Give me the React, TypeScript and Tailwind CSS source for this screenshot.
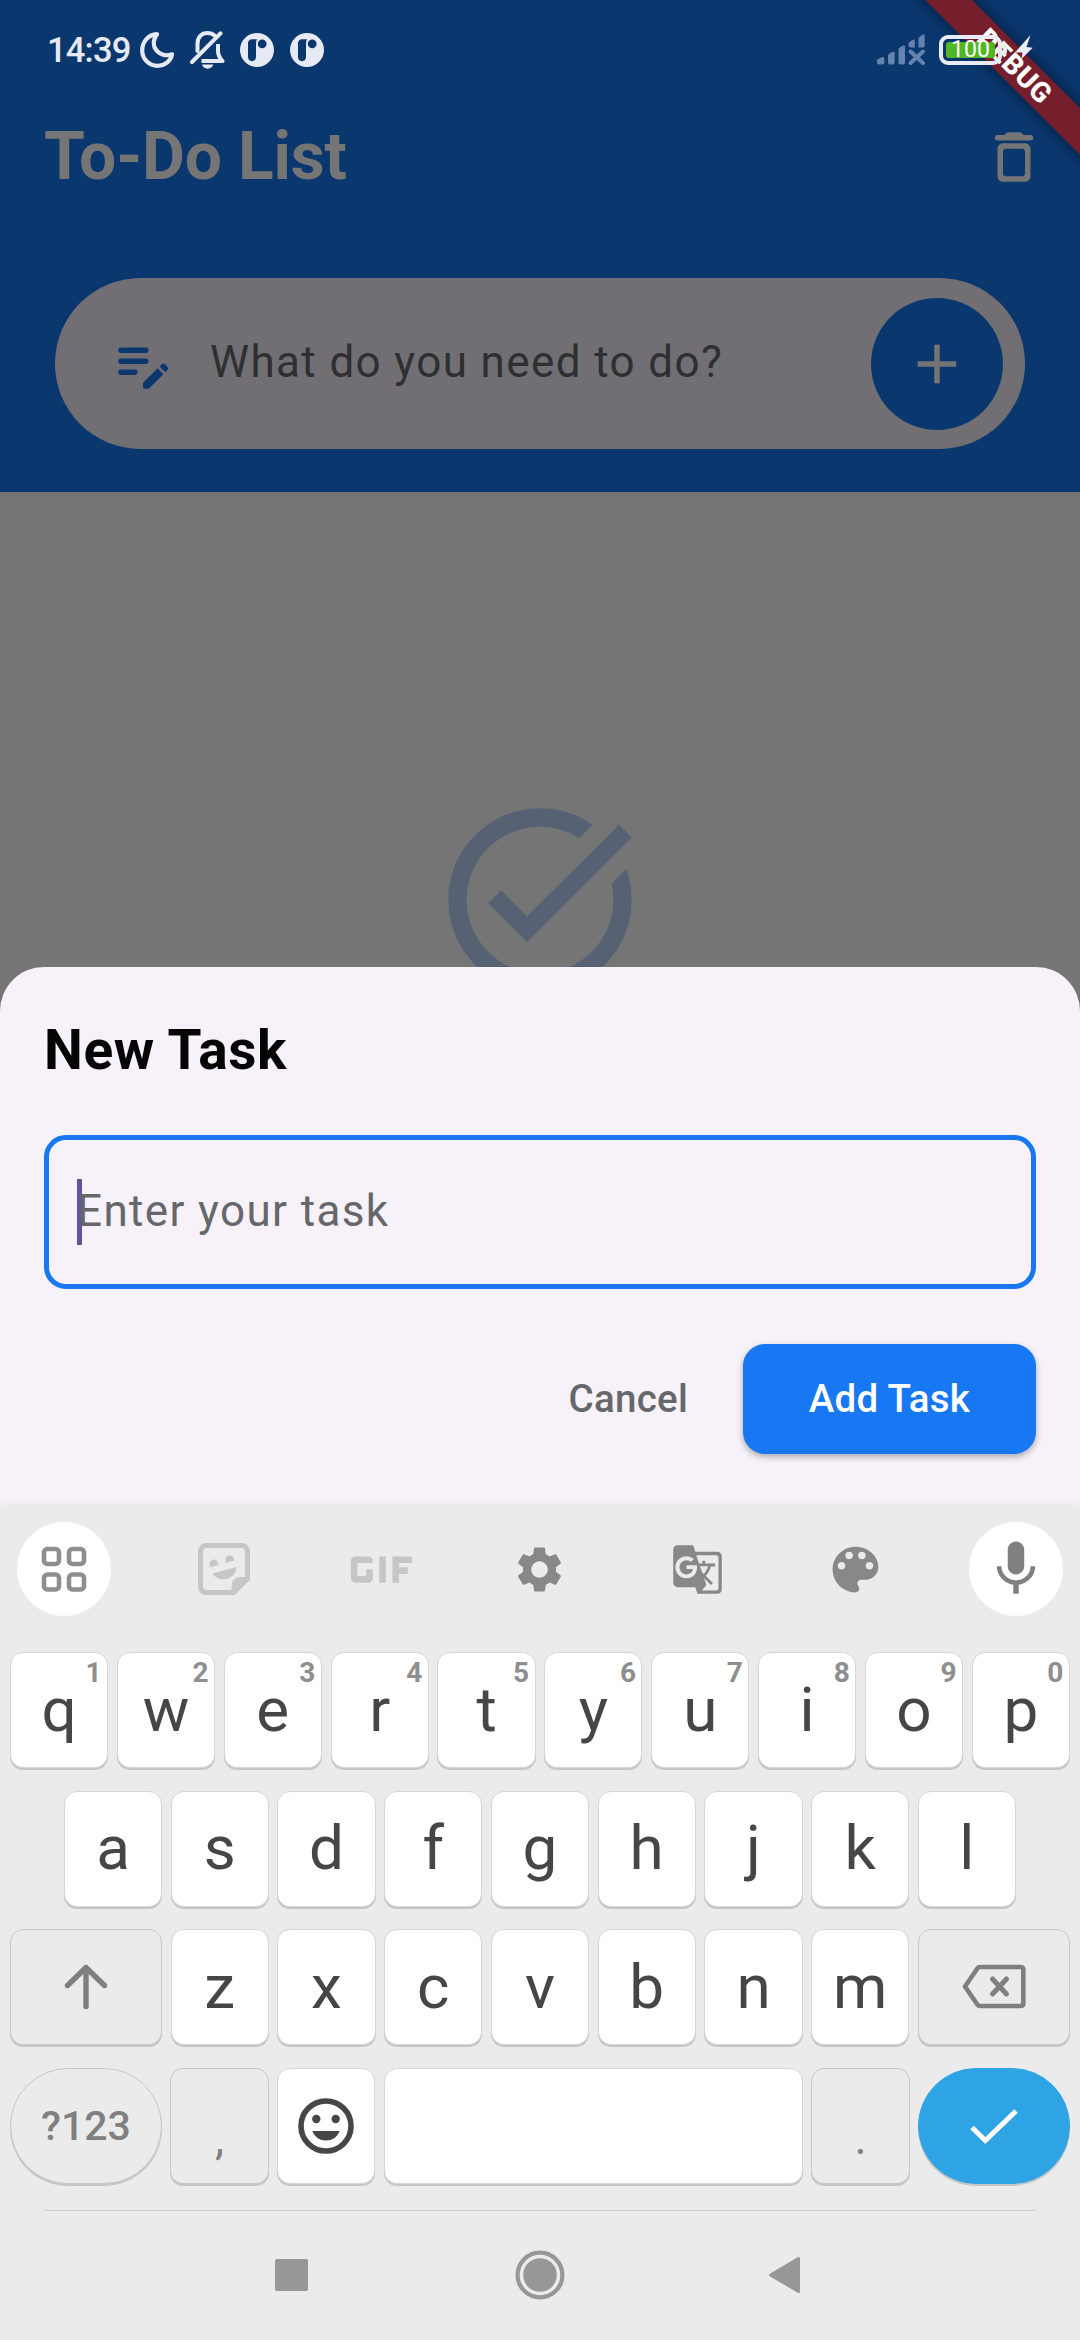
import React from "react";
import { MdSettings, MdGTranslate, MdMic, MdTaskAlt, MdAdd, MdGif } from "react-icons/md";

function MoonIcon() {
  return (
    <svg width="34" height="36" viewBox="0 0 34 36" fill="none" stroke="#e6eaf4" strokeWidth="4.200" strokeLinejoin="round">
      <path d="M17 2.200C8.500 2.500 2.200 9.500 2.200 18.200C2.200 27 8.900 33.800 17.600 33.800C24.900 33.800 30.700 29.300 32 22.300C19.500 26.500 8 14.500 17 2.200Z" />
    </svg>
  );
}

function BellOffIcon() {
  return (
    <svg width="35" height="38" viewBox="0 0 35 38" fill="none" stroke="#e6eaf4" strokeWidth="4" strokeLinecap="round">
      <path d="M2 31L30.500 2.300" />
      <path d="M7.500 20V13C7.500 6 11.500 2.100 17.500 2.100C20.500 2.100 22.800 2.900 24.600 4.500" />
      <path d="M28 13V20C28 24.500 29 26.300 32.500 30H11.500" strokeLinejoin="round" strokeLinecap="butt" />
      <path d="M12 33.600H23.200C22.600 36.200 20.500 37.700 17.600 37.700S12.600 36.200 12 33.600Z" fill="#e6eaf4" stroke="none" />
    </svg>
  );
}

function AppBadgeIcon() {
  return (
    <svg width="34" height="34" viewBox="0 0 34 34">
      <path
        fillRule="evenodd"
        fill="#e6eaf4"
        d="M17 0a17 17 0 1 1 0 34a17 17 0 1 1 0-34ZM12 6.200C9.500 6.200 8 8 8 10.500V23.500C8 26.300 9.500 28.200 12 28.200S16 26.300 16 23.500V10.500C16 8.500 16.300 7.500 17 6.200ZM22.200 6.400a4.400 4.400 0 1 0 0 8.800a4.400 4.400 0 1 0 0-8.800Z"
      />
    </svg>
  );
}

function SignalIcon() {
  return (
    <svg width="48" height="31" viewBox="0 0 48 31" fill="#6583ac">
      <path d="M0 26Q3 23.500 5.500 23Q7.300 22.600 7.300 24.500V28.500Q7.300 30.500 5.300 30.500H2Q0 30.500 0 28.500Z" />
      <path d="M11 21Q13 18.500 16 17.800Q17.600 17.500 17.600 19.200V28.500Q17.600 30.500 15.600 30.500H13Q11 30.500 11 28.500Z" />
      <path d="M21.500 15Q23.500 12.500 26.300 11.600Q28 11.200 28 13V28.500Q28 30.500 26 30.500H23.500Q21.500 30.500 21.500 28.500Z" />
      <path d="M31.500 9Q33.500 6.500 36.300 5.700Q37.800 5.300 37.800 7V13.500H33.500Q31.500 13.500 31.500 11.500Z" />
      <path d="M41.500 4Q43.500 1.500 46 .5Q47.700 0 47.700 1.800V11.500Q47.700 13.500 45.700 13.500H41.500Z" />
      <path d="M33.500 17.500L46 29M46 17.500L33.500 29" stroke="#6583ac" strokeWidth="4" strokeLinecap="round" />
    </svg>
  );
}

function StatusBar() {
  return (
    <div className="relative z-10 flex h-[99px] items-center justify-between pl-[47px] pr-[47px]">
      <div className="flex items-center">
        <span className="w-[93px] pt-[2px] text-[34.500px] font-medium leading-none tracking-[-0.800px] text-[#e6eaf4]">14:39</span>
        <MoonIcon />
        <span className="ml-[16px]"><BellOffIcon /></span>
        <span className="ml-[15px]"><AppBadgeIcon /></span>
        <span className="ml-[16px]"><AppBadgeIcon /></span>
      </div>
      <div className="flex items-center">
        <SignalIcon />
        <div className="ml-[14px] flex h-[30px] w-[63px] items-center rounded-[9px] border-4 border-[#e9ecf5] p-[3px]">
          <div className="flex h-full w-full items-center justify-center rounded-[3px] bg-[#51b623] text-[23px] leading-none text-white">
            100
          </div>
        </div>
        <span className="ml-[1px] h-[11px] w-[4px] rounded-r-[4px] bg-[#e9ecf5]" />
        <svg className="mb-[6px] ml-[8px]" width="18" height="24" viewBox="0 0 18 24">
          <path d="M15.500 0L0 17.500H7.500L6.500 24L17.700 12.800L11.500 12Z" fill="#e9ecf5" />
        </svg>
      </div>
    </div>
  );
}

function DebugRibbon() {
  return (
    <div className="pointer-events-none absolute right-0 top-0 h-[220px] w-[220px] overflow-hidden">
      <div className="absolute left-[-46px] top-[49px] flex h-[33px] w-[400px] rotate-45 items-center justify-center bg-[#761e2b] pl-[2px] text-[28px] font-extrabold leading-none tracking-[0.600px] text-white shadow-[0_0_16px_rgba(0,0,0,0.500)]">
        DEBUG
      </div>
    </div>
  );
}

function TrashIcon() {
  return (
    <svg width="66" height="66" viewBox="0 0 24 24" fill="#757575">
      <path d="M6 19c0 1.100.9 2 2 2h8c1.100 0 2-.9 2-2V9c0-1.100-.9-2-2-2H8c-1.100 0-2 .9-2 2v10zM9 9h6c.55 0 1 .45 1 1v8c0 .55-.45 1-1 1H9c-.55 0-1-.45-1-1v-8c0-.55.45-1 1-1zm6.500-5l-.71-.71c-.18-.18-.44-.29-.7-.29H9.910c-.26 0-.52.11-.7.29L8.500 4H6c-.55 0-1 .45-1 1s.45 1 1 1h12c.55 0 1-.45 1-1s-.45-1-1-1h-2.500z" />
    </svg>
  );
}

function EditNoteIcon() {
  return (
    <svg width="66" height="66" viewBox="0 0 24 24" fill="#0b376f">
      <rect x="3" y="6" width="11" height="2" rx="0.900" />
      <rect x="3" y="10" width="11" height="2" rx="0.900" />
      <rect x="3" y="14" width="7" height="2" rx="0.900" />
      <path d="M18.010 12.870l.71-.71a.996.996 0 0 1 1.410 0l.71.71c.39.39.39 1.020 0 1.410l-.71.71-2.120-2.120zM17.300 13.580l-5.150 5.150q-.15.15-.15.350v1.420q0 .5.5.5h1.410q.2 0 .36-.15l5.150-5.150z" />
    </svg>
  );
}

function Header() {
  return (
    <header className="relative h-[492px] shrink-0 bg-[#0b376f]">
      <DebugRibbon />
      <StatusBar />
      <div className="flex h-[115px] items-center justify-between pl-[44px] pr-[33px]">
        <h1 className="text-[66px] font-bold leading-none tracking-[-0.200px] text-[#757575]">To-Do List</h1>
        <TrashIcon />
      </div>
      <div className="mx-[55px] mt-[64px] flex h-[171px] items-center rounded-full bg-[#716f73] pl-[55px] pr-[22px]">
        <EditNoteIcon />
        <span className="ml-[34px] flex-1 pb-[4px] text-[44px] leading-none tracking-[1.375px] text-[#2e2f31]">What do you need to do?</span>
        <span className="flex h-[132px] w-[132px] items-center justify-center rounded-full bg-[#0b376f]">
          <MdAdd size={66} color="#757575" />
        </span>
      </div>
    </header>
  );
}

function TaskSheet() {
  return (
    <section className="relative -mt-[44px] h-[539px] shrink-0 rounded-t-[44px] bg-[#f7f2fa] px-[44px] pt-[44px]">
      <h2 className="h-[80px] text-[55px] font-bold leading-[78px] tracking-[0.600px] text-[#050505]">New Task</h2>
      <div className="relative mt-[44px] flex h-[154px] items-center rounded-[22px] border-[5.500px] border-[#1877f2] pl-[28px]">
        <span className="absolute left-[27.500px] top-[39px] h-[66px] w-[5.500px] bg-[#6750a4]" />
        <span className="relative pb-[2px] text-[44px] leading-none tracking-[1.375px] text-[#65676b]">Enter your task</span>
      </div>
      <div className="mt-[55px] flex h-[110px] items-center justify-end text-[38.500px] font-medium">
        <span className="mr-[55px] tracking-[0.275px] text-[#65676b]">Cancel</span>
        <button className="h-full w-[293px] rounded-[22px] bg-[#1877f2] tracking-[0.275px] text-white shadow-[0_3px_6px_rgba(0,0,0,0.300)]">Add Task</button>
      </div>
    </section>
  );
}

function StickerIcon() {
  return (
    <svg width="52" height="52" viewBox="0 0 52 52">
      <path d="M9 2.500H43Q49.500 2.500 49.500 9V35.500L35.500 49.500H9Q2.500 49.500 2.500 43V9Q2.500 2.500 9 2.500Z" fill="none" stroke="#c6c6c6" strokeWidth="5" />
      <path d="M52 34V36.500L36.500 52H33.500V43.500Q33.500 34 43 34ZM14.500 30.500L38.500 24Q37.500 34.500 27.500 36.200Q18.500 37 14.500 30.500ZM11.500 24.500Q10.500 17 15.500 16.500Q20 16.500 20.500 22ZM27.500 20Q26.500 12.500 31.500 12.200Q36 12.500 36.500 17.500Z" fill="#c6c6c6" />
    </svg>
  );
}

function GridIcon() {
  return (
    <svg width="46" height="46" viewBox="0 0 46 46" fill="none" stroke="#8e8e8e" strokeWidth="4.600">
      <rect x="3" y="3" width="15" height="15" rx="3.500" />
      <rect x="28" y="3" width="15" height="15" rx="3.500" />
      <rect x="3" y="28.500" width="15" height="15" rx="3.500" />
      <rect x="28" y="28.500" width="15" height="15" rx="3.500" />
    </svg>
  );
}

function PaletteIcon() {
  return (
    <svg width="61" height="61" viewBox="0 0 24 24" fill="#888888">
      <path d="M12 3c-4.970 0-9 4.030-9 9s4.030 9 9 9c.83 0 1.500-.67 1.500-1.500 0-.39-.15-.74-.39-1.010-.23-.26-.38-.61-.38-.99 0-.83.67-1.500 1.500-1.500H16c2.760 0 5-2.240 5-5 0-4.420-4.030-8-9-8zm-5.500 9c-.83 0-1.500-.67-1.500-1.500S5.670 9 6.500 9 8 9.670 8 10.500 7.330 12 6.500 12zm3-4C8.670 8 8 7.330 8 6.500S8.670 5 9.500 5s1.500.67 1.500 1.500S10.330 8 9.500 8zm5 0c-.83 0-1.500-.67-1.500-1.500S13.670 5 14.500 5s1.500.67 1.500 1.500S15.330 8 14.500 8zm3 4c-.83 0-1.500-.67-1.500-1.500S16.670 9 17.500 9s1.500.67 1.500 1.500-.67 1.500-1.500 1.500z" />
    </svg>
  );
}

function Toolbar() {
  return (
    <div className="flex h-[94px] items-center justify-between px-[17px]">
      <span className="flex h-[94px] w-[94px] items-center justify-center rounded-full bg-white"><GridIcon /></span>
      <span className="flex w-[94px] justify-center pl-[2px]"><StickerIcon /></span>
      <span className="flex w-[94px] justify-center"><MdGif className="shrink-0" size={105} color="#c6c6c6" /></span>
      <span className="flex w-[94px] justify-center"><MdSettings size={55} color="#888888" /></span>
      <span className="flex w-[94px] justify-center pr-[3px]"><MdGTranslate size={53} color="#888888" /></span>
      <span className="flex w-[94px] justify-center pr-[4px]"><PaletteIcon /></span>
      <span className="flex h-[94px] w-[94px] items-center justify-center rounded-full bg-white"><MdMic size={66} color="#808080" /></span>
    </div>
  );
}

type KeyProps = { children?: React.ReactNode; hint?: string; className?: string };

function Key({ children, hint, className = "w-[98.200px] rounded-[13px] bg-white border-[#d6d6d6]" }: KeyProps) {
  return (
    <div className={`relative flex h-[116px] items-center justify-center border shadow-[0_2px_0_#c6c6c6] ${className}`}>
      <span className="pb-[1px] text-[62px] leading-none text-[#464646]">{children}</span>
      {hint && <span className="absolute right-[6px] top-[6px] text-[28px] font-bold leading-none tracking-[-0.500px] text-[#8e8e8e]">{hint}</span>}
    </div>
  );
}

function LetterKeys({ letters }: { letters: string }) {
  return <>{letters.split("").map((c) => <Key key={c}>{c}</Key>)}</>;
}

function Keyboard() {
  return (
    <section className="relative flex flex-1 flex-col bg-[#ebebeb] pt-[16px] shadow-[0_-1px_5px_rgba(0,0,0,0.060)]">
      <Toolbar />
      <div className="mt-[36px] flex flex-col gap-[22.600px] px-[10px]">
        <div className="flex justify-between">
          {"qwertyuiop".split("").map((c, i) => (
            <Key key={c} hint={String((i + 1) % 10)}>{c}</Key>
          ))}
        </div>
        <div className="flex justify-between px-[54px]">
          <LetterKeys letters="asdfghjkl" />
        </div>
        <div className="flex justify-between">
          <Key className="w-[152px] rounded-[13px] border-[#c8c8c8] bg-[#ebebeb]">
            <svg width="44" height="46" viewBox="0 0 44 46" fill="none" stroke="#7f7f7f" strokeWidth="5.400" strokeLinecap="round" strokeLinejoin="round">
              <path d="M22 42.500V3.500M3.500 21.500L22 3.500L40.500 21.500" />
            </svg>
          </Key>
          <LetterKeys letters="zxcvbnm" />
          <Key className="w-[152px] rounded-[13px] border-[#c8c8c8] bg-[#ebebeb]">
            <svg width="64" height="46" viewBox="0 0 64 46" fill="none" stroke="#7f7f7f" strokeWidth="4.600" strokeLinejoin="round">
              <path d="M18 3H58.500Q61.300 3 61.300 5.500V39.500Q61.300 42 58.500 42H18Q16.500 42 15.500 40.800L3 22.500L15.500 4.200Q16.500 3 18 3Z" />
              <path d="M30.500 15L44.500 30M44.500 15L30.500 30" strokeWidth="5" strokeLinecap="round" />
            </svg>
          </Key>
        </div>
        <div className="flex justify-between">
          <Key className="w-[152px] rounded-full border-[#c8c8c8] bg-[#ebebeb]">
            <span className="block pt-[3px] text-[41px] font-medium leading-none text-[#808080]">?123</span>
          </Key>
          <Key className="w-[98.200px] rounded-[13px] border-[#c8c8c8] bg-[#ebebeb]">
            <span className="block pt-[26px] text-[46px] leading-none text-[#808080]">,</span>
          </Key>
          <Key>
            <svg className="mt-[2px]" width="56" height="56" viewBox="0 0 56 56" fill="#464646">
              <circle cx="28" cy="28" r="25" fill="none" stroke="#464646" strokeWidth="5.600" />
              <circle cx="18.300" cy="21" r="4.200" />
              <circle cx="37.700" cy="21" r="4.200" />
              <path d="M14.300 33H41.700Q38 42.500 28 42.500T14.300 33Z" />
            </svg>
          </Key>
          <Key className="w-[419.500px] rounded-[13px] border-[#d6d6d6] bg-white" />
          <Key className="w-[98.200px] rounded-[13px] border-[#c8c8c8] bg-[#ebebeb]">
            <span className="block pt-[26px] text-[46px] leading-none text-[#808080]">.</span>
          </Key>
          <Key className="w-[152px] rounded-full border-[#2fa4e5] bg-[#2fa4e5]">
            <svg className="mt-[4px]" width="48" height="38" viewBox="0 0 48 38" fill="none" stroke="#ffffff" strokeWidth="5">
              <path d="M2 19.500L15.300 32.500L46 3" />
            </svg>
          </Key>
        </div>
      </div>
      <div className="mx-[44px] mt-[26px] h-px bg-[#d0d0d0]" />
      <nav className="flex h-[129px] items-center pl-[275px]">
        <span className="h-[32px] w-[33px] rounded-[2px] bg-[#979797]" />
        <svg className="ml-[207px]" width="50" height="50" viewBox="0 0 50 50">
          <circle cx="25" cy="25" r="22.400" fill="none" stroke="#979797" strokeWidth="4.200" />
          <circle cx="25" cy="25" r="16.800" fill="#979797" />
        </svg>
        <svg className="ml-[203px]" width="33" height="38" viewBox="0 0 33 38">
          <path d="M2.500 19L30.500 2.500V35.500Z" fill="#979797" stroke="#979797" strokeWidth="3" strokeLinejoin="round" />
        </svg>
      </nav>
    </section>
  );
}

export default function App() {
  return (
    <div className="flex h-[2340px] w-[1080px] flex-col overflow-hidden bg-[#757575] font-[Roboto,sans-serif]">
      <Header />
      <main className="flex h-[519px] shrink-0 justify-center overflow-hidden bg-[#757575] pt-[298px]">
        <MdTaskAlt size={220} color="#566273" />
      </main>
      <TaskSheet />
      <Keyboard />
    </div>
  );
}
